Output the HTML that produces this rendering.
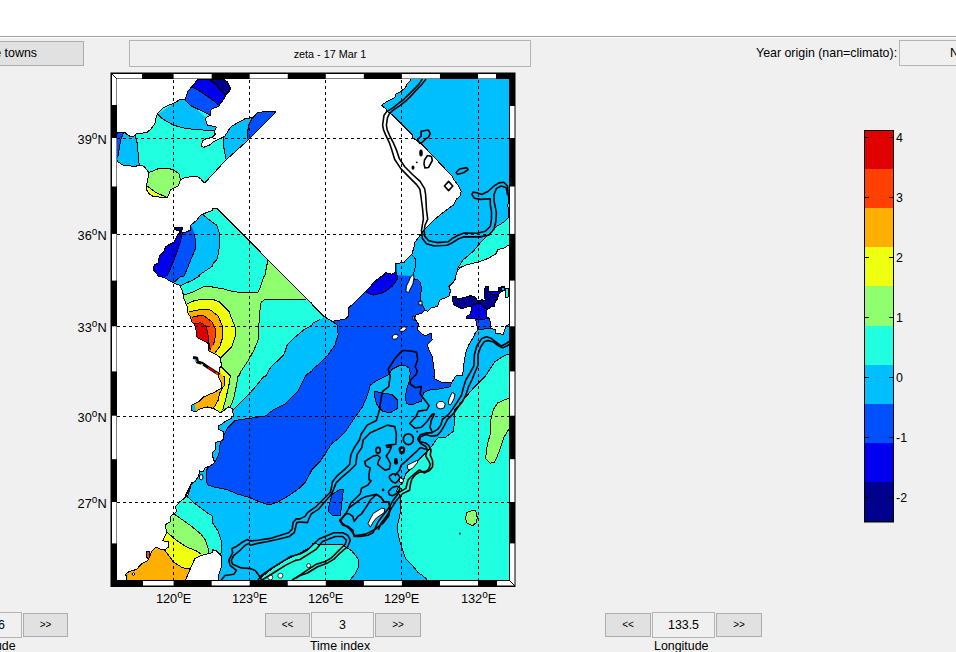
<!DOCTYPE html>
<html><head><meta charset="utf-8">
<style>
html,body{margin:0;padding:0;}
body{width:956px;height:652px;overflow:hidden;background:#f0f0f0;position:relative;font-family:"Liberation Sans",sans-serif;color:#000;}
.top{position:absolute;left:0;top:0;width:956px;height:36px;background:#fff;}
.topline{position:absolute;left:0;top:36px;width:956px;height:1px;background:#a0a0a0;}
.topline2{position:absolute;left:0;top:37px;width:956px;height:1px;background:#fff;}
.btn{position:absolute;box-sizing:border-box;background:#e1e1e1;border:1px solid #adadad;font-size:12.4px;text-align:center;}
.edit{position:absolute;box-sizing:border-box;background:#f0f0f0;border:1px solid #b4b4b4;font-size:12.4px;text-align:center;}
.lbl{position:absolute;font-size:12.4px;white-space:nowrap;}
svg{position:absolute;left:0;top:0;}
</style></head><body>
<div class="top"></div>
<div class="topline"></div>
<div class="topline2"></div>

<div class="btn" style="left:-40px;top:41px;width:124px;height:25px;line-height:23px;text-align:right;padding-right:46px;">le towns</div>
<div class="edit" style="left:129px;top:40px;width:402px;height:27px;line-height:26px;font-size:10.8px;">zeta - 17 Mar 1</div>
<div class="lbl" style="left:756px;top:46px;">Year origin (nan=climato):</div>
<div class="edit" style="left:899px;top:40px;width:80px;height:26px;line-height:24px;text-align:left;padding-left:50px;">NaN</div>

<div class="edit" style="left:-40px;top:612px;width:62px;height:26px;line-height:24px;text-align:right;padding-right:16px;">36</div>
<div class="btn" style="left:23px;top:613px;width:45px;height:24px;line-height:22px;font-size:10px;">&gt;&gt;</div>
<div class="lbl" style="left:-28.5px;top:638.5px;">Latitude</div>

<div class="btn" style="left:265px;top:613px;width:45px;height:24px;line-height:22px;font-size:10px;">&lt;&lt;</div>
<div class="edit" style="left:311px;top:612px;width:63px;height:26px;line-height:24px;">3</div>
<div class="btn" style="left:375px;top:613px;width:46px;height:24px;line-height:22px;font-size:10px;">&gt;&gt;</div>
<div class="lbl" style="left:310px;top:638.5px;">Time index</div>

<div class="btn" style="left:605px;top:613px;width:46px;height:24px;line-height:22px;font-size:10px;">&lt;&lt;</div>
<div class="edit" style="left:652px;top:612px;width:63px;height:26px;line-height:24px;">133.5</div>
<div class="btn" style="left:716px;top:613px;width:46px;height:24px;line-height:22px;font-size:10px;">&gt;&gt;</div>
<div class="lbl" style="left:654px;top:638.5px;">Longitude</div>

<svg width="956" height="652" viewBox="0 0 956 652" font-family="Liberation Sans">
<rect x="110.5" y="72.5" width="405" height="514.5" fill="#000"/>
<rect x="117" y="74" width="25.00" height="4.5" fill="#fff"/>
<rect x="173.6" y="74" width="38.05" height="4.5" fill="#fff"/>
<rect x="249.7" y="74" width="38.05" height="4.5" fill="#fff"/>
<rect x="325.8" y="74" width="38.05" height="4.5" fill="#fff"/>
<rect x="401.9" y="74" width="38.05" height="4.5" fill="#fff"/>
<rect x="478" y="74" width="18.00" height="4.5" fill="#fff"/>
<rect x="143" y="581" width="30.60" height="4.5" fill="#fff"/>
<rect x="211.65" y="581" width="38.05" height="4.5" fill="#fff"/>
<rect x="287.75" y="581" width="38.05" height="4.5" fill="#fff"/>
<rect x="363.85" y="581" width="38.05" height="4.5" fill="#fff"/>
<rect x="439.95" y="581" width="38.05" height="4.5" fill="#fff"/>
<rect x="497" y="581" width="12.00" height="4.5" fill="#fff"/>
<rect x="112" y="79" width="4.5" height="26.00" fill="#fff"/>
<rect x="112" y="138" width="4.5" height="48.50" fill="#fff"/>
<rect x="112" y="233.9" width="4.5" height="46.70" fill="#fff"/>
<rect x="112" y="326.3" width="4.5" height="45.10" fill="#fff"/>
<rect x="112" y="415.7" width="4.5" height="43.50" fill="#fff"/>
<rect x="112" y="502" width="4.5" height="41.40" fill="#fff"/>
<rect x="510" y="106" width="4.5" height="32.00" fill="#fff"/>
<rect x="510" y="186.5" width="4.5" height="47.40" fill="#fff"/>
<rect x="510" y="280.6" width="4.5" height="45.70" fill="#fff"/>
<rect x="510" y="371.4" width="4.5" height="44.30" fill="#fff"/>
<rect x="510" y="459.2" width="4.5" height="42.80" fill="#fff"/>
<rect x="510" y="543.4" width="4.5" height="36.60" fill="#fff"/>
<rect x="112" y="74" width="5" height="5" fill="#fff"/><line x1="111" y1="73" x2="117" y2="79" stroke="#000" stroke-width="1"/>
<rect x="509" y="580" width="5.5" height="5.5" fill="#fff"/><line x1="509" y1="580" x2="515" y2="586" stroke="#000" stroke-width="1"/>
<rect x="117" y="79" width="392" height="501" fill="#fff"/>
<g id="map"><defs><clipPath id="plot"><rect x="117" y="79" width="392" height="501"/></clipPath>
<clipPath id="w1"><path d="M198.4,79.1 L223.0,79.1 L227.6,82.1 L230.3,87.5 L229.9,90.6 L226.0,94.4 L224.5,98.3 L221.4,102.1 L219.1,105.9 L212.2,109.0 L210.7,110.5 L210.7,115.1 L206.1,117.4 L205.7,120.5 L207.6,125.1 L207.2,124.7 L216.4,127.2 L214.5,130.9 L215.2,134.5 L212.1,137.6 L207.2,138.2 L202.3,140.7 L201.7,146.2 L203.5,147.4 L209.6,145.0 L213.3,141.9 L223.1,137.0 L225.0,135.8 L230.5,127.2 L234.2,124.7 L245.2,118.6 L253.2,117.4 L257.5,112.5 L263.6,111.8 L275.9,111.8 L248.9,139.4 L225.6,160.3 L204.7,183.0 L204.0,182.9 L201.0,179.1 L196.4,176.0 L191.8,176.0 L187.2,177.5 L182.6,178.3 L180.3,180.6 L178.0,186.0 L174.9,187.5 L170.3,189.8 L169.5,192.9 L167.2,197.5 L153.4,196.7 L148.8,193.6 L146.5,189.8 L146.5,185.2 L147.3,182.1 L148.8,172.6 L144.2,166.5 L139.6,165.0 L135.0,166.5 L128.9,165.7 L122.7,165.0 L118.1,161.9 L115.1,157.3 L115.1,133.5 L118.9,132.7 L124.3,132.0 L125.8,133.5 L130.4,136.6 L135.0,135.8 L136.5,133.5 L146.5,132.7 L150.3,129.7 L154.9,123.5 L156.5,115.9 L158.0,112.8 L162.6,108.2 L170.3,104.4 L173.3,103.6 L179.5,99.8 L184.9,99.8 L186.4,95.9 L187.9,91.3 L191.8,86.7 L195.6,82.1Z"/></clipPath>
<clipPath id="w2"><path d="M174.9,227.4 L182.6,227.4 L182.9,229.7 L180.3,231.2 L184.1,232.7 L190.2,230.4 L191.0,225.1 L196.4,220.5 L200.2,215.6 L204.0,213.6 L212.0,210.5 L212.0,209.0 L216.6,208.2 L248.8,240.4 L284.1,276.0 L307.1,299.0 L312.0,303.6 L312.0,304.4 L324.3,316.6 L331.9,321.2 L338.1,320.5 L345.7,318.9 L348.8,315.9 L348.8,311.3 L348.0,308.2 L353.4,303.6 L358.0,299.0 L362.6,294.4 L365.7,291.3 L370.3,286.7 L373.3,282.9 L379.5,277.5 L382.6,276.0 L385.6,272.6 L391.8,274.2 L395.6,271.9 L395.6,263.4 L404.0,262.7 L405.6,260.4 L410.2,255.8 L412.0,254.2 L412.0,252.7 L413.5,249.6 L415.1,242.0 L419.7,235.8 L424.3,229.7 L428.9,225.1 L433.5,220.5 L438.1,216.6 L442.7,212.8 L448.8,208.2 L453.4,205.1 L456.5,199.0 L460.3,195.9 L461.1,191.3 L458.0,185.2 L453.4,179.1 L451.9,176.0 L451.9,176.0 L421.2,143.5 L412.0,137.3 L412.0,134.3 L391.8,114.3 L387.2,111.3 L385.6,108.2 L381.8,105.9 L382.6,104.4 L388.7,100.5 L394.8,97.5 L395.6,94.4 L401.0,91.3 L405.6,87.5 L407.1,83.7 L410.2,80.6 L413.5,71.4 L519.4,71.4 L519.4,245.0 L508.9,245.0 L504.0,248.1 L497.9,249.6 L495.6,254.2 L487.2,258.8 L478.0,261.9 L465.7,265.0 L459.5,268.0 L456.5,272.6 L455.7,276.0 L455.8,278.6 L452.6,282.9 L448.8,286.6 L450.4,290.4 L449.4,295.8 L445.1,297.9 L439.7,300.1 L437.6,306.5 L431.1,307.6 L427.9,311.3 L424.7,309.7 L422.5,312.9 L416.1,315.1 L414.5,318.3 L418.2,323.7 L417.7,330.1 L422.5,334.4 L425.8,335.5 L431.1,333.3 L432.2,340.0 L427.3,345.0 L428.9,349.6 L431.9,355.8 L433.5,365.0 L435.0,376.0 L433.5,376.0 L435.0,379.1 L442.7,382.9 L451.9,382.1 L454.9,377.5 L456.5,375.2 L462.6,376.0 L464.1,361.9 L465.7,352.7 L468.7,345.0 L473.3,337.3 L475.0,333.4 L477.8,329.7 L475.9,320.5 L475.0,318.7 L466.7,318.2 L466.2,316.4 L470.4,314.1 L471.3,309.5 L471.3,305.8 L462.1,308.5 L459.3,307.6 L453.8,304.9 L452.9,302.1 L452.9,296.6 L456.1,296.6 L457.5,299.3 L462.1,298.0 L470.4,295.7 L475.0,297.0 L477.8,301.2 L481.4,299.8 L485.1,300.3 L484.4,289.2 L486.0,286.4 L488.6,286.4 L488.6,291.6 L491.2,291.6 L498.0,291.4 L498.4,287.6 L501.1,287.2 L501.1,286.4 L504.7,286.4 L504.7,290.8 L501.5,291.2 L500.0,292.8 L498.4,295.2 L497.6,299.2 L495.2,300.8 L494.8,306.0 L491.6,306.7 L487.0,309.5 L486.0,312.2 L487.0,316.8 L489.7,318.7 L490.2,322.4 L490.2,327.9 L495.2,329.7 L495.2,333.4 L503.5,334.3 L504.5,329.7 L506.3,326.0 L509.2,324.2 L513.7,324.2 L519.4,589.4 L218.1,589.4 L218.1,579.7 L218.9,574.0 L221.2,567.9 L222.0,561.8 L221.2,555.6 L216.6,551.0 L212.0,549.5 L212.0,552.6 L207.1,554.1 L201.0,555.6 L194.8,558.7 L188.7,572.5 L185.6,579.7 L185.6,589.4 L126.6,589.4 L126.6,579.7 L125.8,574.0 L128.9,571.7 L136.5,569.4 L141.6,563.7 L147.9,560.5 L152.0,551.0 L156.2,547.0 L160.3,549.0 L164.5,550.1 L168.7,547.0 L168.7,541.7 L162.5,540.7 L166.8,532.3 L164.9,524.9 L170.3,521.9 L171.0,515.7 L176.4,511.9 L175.7,506.5 L179.5,501.9 L187.9,495.8 L190.2,488.1 L191.8,482.0 L183.5,500.0 L186.0,496.3 L188.6,491.3 L190.3,484.5 L195.3,481.1 L198.7,476.1 L199.5,471.0 L202.9,471.9 L205.4,467.6 L210.5,465.9 L214.7,462.6 L213.0,457.5 L212.2,453.3 L215.6,449.1 L215.6,442.3 L220.6,441.5 L224.0,438.9 L223.2,431.4 L218.9,429.7 L218.1,426.3 L222.3,423.8 L225.7,421.2 L230.8,418.7 L233.3,415.3 L232.4,408.6 L228.2,406.9 L224.0,410.3 L220.6,412.8 L213.9,408.6 L207.1,406.9 L200.4,408.6 L195.3,411.9 L191.1,410.3 L191.9,405.2 L198.7,401.8 L203.8,396.8 L213.9,392.5 L221.8,387.8 L220.9,381.4 L218.1,376.8 L220.0,367.6 L221.8,365.8 L220.9,362.1 L220.0,357.5 L216.3,354.7 L212.6,352.9 L208.9,351.0 L208.6,343.5 L202.5,340.4 L197.1,337.3 L196.4,331.2 L194.8,325.1 L191.8,322.0 L190.2,316.6 L187.9,312.8 L187.2,306.7 L184.1,299.0 L182.6,291.3 L179.5,285.2 L173.3,282.9 L164.1,277.5 L158.0,276.0 L156.5,273.4 L153.4,269.6 L154.2,265.0 L158.0,263.4 L159.5,255.8 L164.1,251.2 L165.7,246.6 L174.1,242.0 L176.4,237.3 L179.5,232.7 L178.7,230.4 L174.9,229.7Z"/></clipPath></defs>
<g clip-path="url(#plot)">
<g clip-path="url(#w1)"><rect x="117" y="79" width="392" height="501" fill="#20ffdf"/>
<path d="M135.0,135.8 L137.3,143.5 L138.1,152.7 L138.8,161.9 L139.6,165.0 L135.0,174.2 L112.0,174.2 L112.0,122.0Z" fill="#00bfff" stroke="none"/><path d="M135.0,135.8 L137.3,143.5 L138.1,152.7 L138.8,161.9 L139.6,165.0" fill="none" stroke="#000" stroke-width="1" stroke-linejoin="round" shape-rendering="crispEdges" />
<path d="M124.0,132.0 L120.9,138.9 L119.4,148.1 L117.8,157.3 L116.6,161.9 L112.0,168.0 L112.0,122.0Z" fill="#0050ff" stroke="none"/><path d="M124.0,132.0 L120.9,138.9 L119.4,148.1 L117.8,157.3" fill="none" stroke="#000" stroke-width="1" stroke-linejoin="round" shape-rendering="crispEdges" />
<path d="M158.0,114.3 L162.6,118.9 L173.3,125.1 L184.1,128.1 L196.4,129.7 L212.0,130.4 L215.2,131.5 L216.4,127.2 L206.0,117.4 L184.9,99.8 L150.3,88.3 L210.7,115.1 L199.2,109.8 L190.0,105.2 L184.6,99.8 L180.0,99.0Z" fill="#00bfff" stroke="none"/><path d="M158.0,114.3 L162.6,118.9 L173.3,125.1 L184.1,128.1 L196.4,129.7 L212.0,130.4 L215.2,131.5 M210.7,115.1 L199.2,109.8 L190.0,105.2 L184.6,99.8" fill="none" stroke="#000" stroke-width="1" stroke-linejoin="round" shape-rendering="crispEdges" />
<path d="M184.6,99.8 L190.0,105.2 L199.2,109.8 L210.7,115.1 L241.4,115.1 L241.4,76.0 L180.0,76.0 L180.0,99.8Z" fill="#0050ff" stroke="none"/><path d="M184.6,99.8 L190.0,105.2 L199.2,109.8 L210.7,115.1" fill="none" stroke="#000" stroke-width="1" stroke-linejoin="round" shape-rendering="crispEdges" />
<path d="M192.7,87.1 L200.0,91.3 L209.2,97.5 L219.1,105.2 L241.4,105.2 L241.4,76.0 L180.0,76.0 L180.0,87.1Z" fill="#0000ef" stroke="none"/><path d="M192.7,87.1 L200.0,91.3 L209.2,97.5 L219.1,105.2" fill="none" stroke="#000" stroke-width="1" stroke-linejoin="round" shape-rendering="crispEdges" />
<path d="M209.2,79.1 L216.1,85.2 L223.0,92.9 L225.3,96.0 L241.4,96.0 L241.4,76.0 L209.2,76.0Z" fill="#00008f" stroke="none"/><path d="M209.2,79.1 L216.1,85.2 L223.0,92.9 L225.3,96.0" fill="none" stroke="#000" stroke-width="1" stroke-linejoin="round" shape-rendering="crispEdges" />
<path d="M223.1,137.0 L223.7,146.8 L226.2,160.3 L263.6,160.3 L288.2,110.0 L226.8,110.0 L223.1,122.3Z" fill="#00bfff" stroke="none"/><path d="M223.1,137.0 L223.7,146.8 L226.2,160.3" fill="none" stroke="#000" stroke-width="1" stroke-linejoin="round" shape-rendering="crispEdges" />
<path d="M252.6,117.4 L248.9,124.7 L247.1,134.5 L247.7,139.4 L288.2,139.4 L288.2,110.0 L252.6,110.0Z" fill="#0050ff" stroke="none"/><path d="M252.6,117.4 L248.9,124.7 L247.1,134.5 L247.7,139.4" fill="none" stroke="#000" stroke-width="1" stroke-linejoin="round" shape-rendering="crispEdges" />
<path d="M148.8,172.6 L158.0,168.8 L165.7,168.0 L173.3,169.6 L179.5,174.2 L180.3,179.8 L181.0,188.3 L176.4,206.7 L142.7,206.7 L139.6,176.0 L139.6,271.1Z" fill="#8fff70" stroke="none"/><path d="M148.8,172.6 L158.0,168.8 L165.7,168.0 L173.3,169.6 L179.5,174.2 L180.3,179.8" fill="none" stroke="#000" stroke-width="1" stroke-linejoin="round" shape-rendering="crispEdges" />
<path d="M147.3,186.0 L156.5,192.9 L165.7,196.7 L167.2,206.7 L142.7,206.7 L142.7,183.7Z" fill="#efff10" stroke="none"/><path d="M147.3,186.0 L156.5,192.9 L165.7,196.7" fill="none" stroke="#000" stroke-width="1" stroke-linejoin="round" shape-rendering="crispEdges" />
</g>
<g clip-path="url(#w2)"><rect x="117" y="79" width="392" height="501" fill="#00bfff"/>
<path d="M194.8,234.3 L195.6,248.1 L188.7,265.0 L184.1,276.0 L181.0,276.0 L173.3,282.9 L158.0,282.9 L158.0,276.0 L150.3,276.0 L150.3,226.6 L191.8,226.6Z" fill="#0050ff" stroke="none"/><path d="M194.8,234.3 L195.6,248.1 L188.7,265.0 L184.1,276.0 L181.0,276.0 L173.3,282.9" fill="none" stroke="#000" stroke-width="1" stroke-linejoin="round" shape-rendering="crispEdges" />
<path d="M182.6,232.7 L179.5,245.0 L173.3,261.9 L167.2,276.0 L150.3,283.4 L150.3,226.6 L182.6,226.6Z" fill="#0000ef" stroke="none"/><path d="M182.6,232.7 L179.5,245.0 L173.3,261.9 L167.2,276.0" fill="none" stroke="#000" stroke-width="1" stroke-linejoin="round" shape-rendering="crispEdges" />
<path d="M175.2,227.2 L182.5,227.2 L182.5,229.6 L180.7,230.2 L180.1,233.3 L178.8,233.3 L178.2,230.2 L175.2,229.6Z" fill="#00008f" stroke="none"/><path d="M175.2,227.2 L182.5,227.2 L182.5,229.6 L180.7,230.2 L180.1,233.3 L178.8,233.3 L178.2,230.2 L175.2,229.6Z" fill="none" stroke="#000" stroke-width="1" stroke-linejoin="round" shape-rendering="crispEdges" />
<path d="M202.5,214.3 L212.0,222.0 L212.0,222.0 L216.6,225.1 L219.7,234.3 L219.7,245.0 L217.4,258.8 L212.0,265.0 L212.0,266.5 L197.9,276.0 L199.4,276.0 L191.8,280.6 L179.5,286.0 L183.3,295.2 L194.8,291.3 L204.0,286.7 L212.0,286.0 L212.0,287.5 L221.2,288.3 L231.9,291.3 L242.7,292.9 L258.0,292.1 L261.1,285.2 L264.1,276.0 L264.9,276.0 L265.7,271.1 L268.0,259.6 L273.3,252.7 L242.7,191.3 L212.0,191.3 L197.9,206.7Z" fill="#20ffdf" stroke="none"/><path d="M202.5,214.3 L212.0,222.0 L212.0,222.0 L216.6,225.1 L219.7,234.3 L219.7,245.0 L217.4,258.8 L212.0,265.0 L212.0,266.5 L197.9,276.0 L199.4,276.0 L191.8,280.6 L179.5,286.0 L183.3,295.2 L194.8,291.3 L204.0,286.7 L212.0,286.0 L212.0,287.5 L221.2,288.3 L231.9,291.3 L242.7,292.9 L258.0,292.1 L261.1,285.2 L264.1,276.0 L264.9,276.0 L265.7,271.1 L268.0,259.6" fill="none" stroke="#000" stroke-width="1" stroke-linejoin="round" shape-rendering="crispEdges" />
<path d="M183.3,295.2 L194.8,291.3 L204.0,286.7 L212.0,286.0 L212.0,287.5 L221.2,288.3 L231.9,291.3 L242.7,292.9 L258.0,292.1 L261.1,285.2 L264.1,276.0 L264.9,276.0 L265.7,271.1 L268.0,259.6 L288.7,268.0 L319.4,291.3 L319.4,300.5 L305.6,300.5 L265.7,299.0 L261.1,302.1 L259.5,314.3 L258.8,326.6 L258.0,340.4 L253.4,351.2 L247.3,361.9 L241.1,371.1 L238.8,376.0 L238.1,376.0 L236.5,385.2 L233.5,399.0 L230.4,406.7 L227.3,411.3 L212.0,422.0 L173.3,375.7 L173.3,291.3Z" fill="#8fff70" stroke="none"/><path d="M183.3,295.2 L194.8,291.3 L204.0,286.7 L212.0,286.0 L212.0,287.5 L221.2,288.3 L231.9,291.3 L242.7,292.9 L258.0,292.1 L261.1,285.2 L264.1,276.0 L264.9,276.0 L265.7,271.1 L268.0,259.6 M265.7,299.0 L261.1,302.1 L259.5,314.3 L258.8,326.6 L258.0,340.4 L253.4,351.2 L247.3,361.9 L241.1,371.1 L238.8,376.0 L238.1,376.0 L236.5,385.2 L233.5,399.0 L230.4,406.7" fill="none" stroke="#000" stroke-width="1" stroke-linejoin="round" shape-rendering="crispEdges" />
<path d="M187.2,303.6 L194.8,300.5 L204.0,299.0 L212.0,299.0 L212.0,299.0 L219.7,302.1 L228.9,311.3 L231.9,318.9 L235.0,326.6 L235.0,337.3 L231.9,346.6 L225.8,352.7 L221.2,357.3 L216.6,361.9 L221.2,366.5 L227.3,372.6 L230.4,376.0 L230.4,376.0 L228.9,385.2 L225.8,399.0 L222.7,409.7 L212.0,414.3 L173.3,337.3Z" fill="#efff10" stroke="none"/><path d="M187.2,303.6 L194.8,300.5 L204.0,299.0 L212.0,299.0 L212.0,299.0 L219.7,302.1 L228.9,311.3 L231.9,318.9 L235.0,326.6 L235.0,337.3 L231.9,346.6 L225.8,352.7 L221.2,357.3 M221.2,366.5 L227.3,372.6 L230.4,376.0 L230.4,376.0 L228.9,385.2 L225.8,399.0 L222.7,409.7" fill="none" stroke="#000" stroke-width="1" stroke-linejoin="round" shape-rendering="crispEdges" />
<path d="M188.7,312.0 L199.4,309.7 L207.1,309.0 L212.0,310.5 L212.0,311.3 L218.1,315.9 L222.0,325.1 L222.7,337.3 L219.7,346.6 L215.1,352.7 L212.0,354.2 L218.1,368.0 L222.7,376.0 L224.3,376.0 L224.3,385.2 L219.7,392.9 L218.1,400.5 L213.5,408.2 L196.7,414.3 L181.0,337.3Z" fill="#ffaf00" stroke="none"/><path d="M188.7,312.0 L199.4,309.7 L207.1,309.0 L212.0,310.5 L212.0,311.3 L218.1,315.9 L222.0,325.1 L222.7,337.3 L219.7,346.6 L215.1,352.7 M222.7,376.0 L224.3,376.0 L224.3,385.2 L219.7,392.9 L218.1,400.5 L213.5,408.2" fill="none" stroke="#000" stroke-width="1" stroke-linejoin="round" shape-rendering="crispEdges" />
<path d="M191.8,317.4 L197.9,315.9 L204.0,315.9 L210.2,320.5 L212.0,322.0 L212.0,322.0 L215.1,328.1 L215.1,337.3 L213.5,345.0 L212.0,346.6 L210.2,351.2 L188.7,352.7Z" fill="#ff4000" stroke="none"/><path d="M191.8,317.4 L197.9,315.9 L204.0,315.9 L210.2,320.5 L212.0,322.0 L212.0,322.0 L215.1,328.1 L215.1,337.3 L213.5,345.0" fill="none" stroke="#000" stroke-width="1" stroke-linejoin="round" shape-rendering="crispEdges" />
<path d="M218.1,374.5 L218.1,378.3 L212.0,379.1 L212.0,374.5Z" fill="#ff4000" stroke="none"/><path d="M218.1,374.5 L218.1,378.3" fill="none" stroke="#000" stroke-width="1" stroke-linejoin="round" shape-rendering="crispEdges" />
<path d="M194.1,323.5 L201.0,322.8 L206.3,326.6 L207.9,334.3 L208.6,340.4 L210.2,349.6 L188.7,349.6Z" fill="#df0000" stroke="none"/><path d="M194.1,323.5 L201.0,322.8 L206.3,326.6 L207.9,334.3 L208.6,340.4 L210.2,349.6" fill="none" stroke="#000" stroke-width="1" stroke-linejoin="round" shape-rendering="crispEdges" />
<path d="M265.7,299.0 L305.6,299.0 L312.0,303.6 L312.0,304.4 L324.3,316.6 L319.7,319.7 L312.0,323.5 L312.0,325.1 L304.0,329.7 L294.8,337.3 L287.2,345.0 L284.1,354.2 L276.4,361.9 L270.3,368.0 L265.7,376.0 L264.1,376.0 L258.0,383.7 L248.8,394.4 L239.6,403.6 L233.5,409.7 L228.9,412.8 L228.9,412.8 L230.4,406.7 L233.5,399.0 L236.5,385.2 L238.1,376.0 L238.8,376.0 L241.1,371.1 L247.3,361.9 L253.4,351.2 L258.0,340.4 L258.8,326.6 L259.5,314.3 L261.1,302.1Z" fill="#20ffdf" stroke="none"/><path d="M265.7,299.0 L305.6,299.0 M319.7,319.7 L312.0,323.5 L312.0,325.1 L304.0,329.7 L294.8,337.3 L287.2,345.0 L284.1,354.2 L276.4,361.9 L270.3,368.0 L265.7,376.0 L264.1,376.0 L258.0,383.7 L248.8,394.4 L239.6,403.6 L233.5,409.7 L228.9,412.8 M230.4,406.7 L233.5,399.0 L236.5,385.2 L238.1,376.0 L238.8,376.0 L241.1,371.1 L247.3,361.9 L253.4,351.2 L258.0,340.4 L258.8,326.6 L259.5,314.3 L261.1,302.1 L265.7,299.0" fill="none" stroke="#000" stroke-width="1" stroke-linejoin="round" shape-rendering="crispEdges" />
<path d="M305.6,376.0 L297.9,391.3 L285.6,403.6 L273.3,409.7 L265.7,415.9 L250.3,418.2 L235.0,420.5 L227.3,428.1 L224.3,434.3 L220.6,440.6 L218.9,454.1 L215.6,460.9 L208.8,465.9 L206.3,471.0 L207.1,484.5 L212.0,486.6 L227.3,489.7 L238.1,494.3 L248.8,497.3 L258.0,501.2 L268.7,505.0 L278.0,501.9 L288.7,495.8 L299.4,488.1 L305.6,482.0 L312.0,469.6 L319.7,461.9 L325.8,452.7 L331.9,443.5 L338.1,438.9 L345.7,431.2 L354.9,417.4 L362.6,406.7 L367.2,395.9 L370.3,385.2 L376.4,380.6 L382.1,377.9 L389.4,374.2 L391.9,369.3 L399.3,365.6 L404.2,365.0 L409.1,368.0 L410.3,372.9 L409.1,381.5 L406.6,388.9 L405.4,397.5 L406.6,403.6 L411.5,404.8 L421.3,401.2 L423.8,392.6 L428.7,390.1 L440.0,388.9 L435.0,389.8 L450.3,386.7 L453.4,376.0 L458.0,368.3 L458.0,322.0 L442.7,276.0 L412.0,276.0 L382.6,274.5 L358.0,291.3 L342.7,314.3 L331.9,321.2 L337.3,325.1 L338.1,334.3 L335.0,345.0 L327.3,355.8 L319.7,363.4 L312.0,369.6 L312.0,371.1 L307.1,374.2Z" fill="#0050ff" stroke="none"/><path d="M305.6,376.0 L297.9,391.3 L285.6,403.6 L273.3,409.7 L265.7,415.9 L250.3,418.2 L235.0,420.5 L227.3,428.1 L224.3,434.3 L220.6,440.6 L218.9,454.1 L215.6,460.9 L208.8,465.9 L206.3,471.0 L207.1,484.5 L212.0,486.6 L227.3,489.7 L238.1,494.3 L248.8,497.3 L258.0,501.2 L268.7,505.0 L278.0,501.9 L288.7,495.8 L299.4,488.1 L305.6,482.0 L312.0,469.6 L319.7,461.9 L325.8,452.7 L331.9,443.5 L338.1,438.9 L345.7,431.2 L354.9,417.4 L362.6,406.7 L367.2,395.9 L370.3,385.2 L376.4,380.6 L382.1,377.9 L389.4,374.2 L391.9,369.3 L399.3,365.6 L404.2,365.0 L409.1,368.0 L410.3,372.9 L409.1,381.5 L406.6,388.9 L405.4,397.5 L406.6,403.6 L411.5,404.8 L421.3,401.2 L423.8,392.6 L428.7,390.1 L440.0,388.9 L435.0,389.8 L450.3,386.7 L453.4,376.0 M331.9,321.2 L337.3,325.1 L338.1,334.3 L335.0,345.0 L327.3,355.8 L319.7,363.4 L312.0,369.6 L312.0,371.1 L307.1,374.2 L305.6,376.0" fill="none" stroke="#000" stroke-width="1" stroke-linejoin="round" shape-rendering="crispEdges" />
<path d="M365.7,292.1 L373.3,295.2 L382.6,292.9 L391.8,286.7 L396.4,280.6 L397.9,276.0 L397.6,279.7 L396.7,272.4 L396.0,250.0 L340.0,250.0 L340.0,300.0Z" fill="#0000ef" stroke="none"/><path d="M365.7,292.1 L373.3,295.2 L382.6,292.9 L391.8,286.7 L396.4,280.6 L397.9,276.0 L397.6,279.7 L396.7,272.4" fill="none" stroke="#000" stroke-width="1" stroke-linejoin="round" shape-rendering="crispEdges" />
<path d="M412.0,240.0 L412.4,254.9 L415.1,258.5 L415.1,267.8 L413.3,274.2 L414.2,279.7 L417.9,279.7 L420.6,282.5 L421.6,290.0 L420.4,293.6 L420.9,301.1 L424.7,309.7 L427.9,311.3 L470.0,311.0 L470.0,240.0Z" fill="#00bfff" stroke="none"/><path d="M412.4,254.9 L415.1,258.5 L415.1,267.8 L413.3,274.2 L414.2,279.7 L417.9,279.7 L420.6,282.5 L421.6,290.0 L420.4,293.6 L420.9,301.1 L424.7,309.7 L427.9,311.3" fill="none" stroke="#000" stroke-width="1" stroke-linejoin="round" shape-rendering="crispEdges" />
<path d="M508.9,195.9 L507.9,205.1 L508.6,217.4 L504.0,222.0 L496.4,226.6 L490.2,232.7 L481.0,242.0 L473.3,251.2 L462.6,260.4 L458.0,268.0 L456.5,276.0 L519.4,283.4 L519.4,195.9Z" fill="#20ffdf" stroke="none"/><path d="M508.9,195.9 L507.9,205.1 L508.6,217.4 L504.0,222.0 L496.4,226.6 L490.2,232.7 L481.0,242.0 L473.3,251.2 L462.6,260.4 L458.0,268.0 L456.5,276.0" fill="none" stroke="#000" stroke-width="1" stroke-linejoin="round" shape-rendering="crispEdges" />
<path d="M452.0,294.7 L481.4,293.8 L483.3,285.5 L513.7,280.0 L513.7,320.5 L495.2,328.8 L449.2,328.8Z" fill="#00008f" stroke="none"/>
<path d="M471.3,305.8 L475.9,303.9 L479.6,303.0 L483.3,305.8 L487.0,309.5 L495.2,309.5 L495.2,326.0 L463.0,326.0 L463.0,305.8Z" fill="#0000ef" stroke="none"/><path d="M471.3,305.8 L475.9,303.9 L479.6,303.0 L483.3,305.8 L487.0,309.5" fill="none" stroke="#000" stroke-width="1" stroke-linejoin="round" shape-rendering="crispEdges" />
<path d="M475.9,319.6 L489.7,318.7 L495.2,318.7 L495.2,328.3 L490.2,328.3 L477.8,329.7 L467.6,329.7 L467.6,319.6Z" fill="#0050ff" stroke="none"/><path d="M475.9,319.6 L489.7,318.7 M490.2,328.3 L477.8,329.7" fill="none" stroke="#000" stroke-width="1" stroke-linejoin="round" shape-rendering="crispEdges" />
<path d="M491.2,292.0 L498.0,291.8 L500.8,290.8 L500.0,292.8 L498.0,294.7 L492.0,294.4Z" fill="#0000ef" stroke="none"/><path d="M491.2,292.0 L498.0,291.8 L500.8,290.8 L500.0,292.8 L498.0,294.7 L492.0,294.4Z" fill="none" stroke="#000" stroke-width="1" stroke-linejoin="round" shape-rendering="crispEdges" />
<path d="M501.1,287.2 L504.0,287.2 L504.0,290.8 L501.1,290.8Z" fill="#00bfff" stroke="none"/><path d="M501.1,287.2 L504.0,287.2 L504.0,290.8 L501.1,290.8Z" fill="none" stroke="#000" stroke-width="1" stroke-linejoin="round" shape-rendering="crispEdges" />
<path d="M512.0,352.7 L504.0,355.8 L494.8,361.9 L488.7,371.1 L485.6,376.0 L473.3,388.3 L462.6,400.5 L454.9,409.7 L454.9,418.9 L453.4,431.2 L445.7,437.3 L438.7,437.2 L436.3,439.6 L431.3,447.0 L424.0,454.4 L417.9,460.5 L410.5,469.1 L405.6,474.0 L403.1,481.0 L397.6,488.4 L396.7,491.2 L399.4,494.8 L400.4,497.6 L400.4,506.8 L400.2,512.7 L397.1,528.0 L399.4,540.3 L402.5,549.5 L405.6,558.7 L412.0,564.8 L418.1,572.5 L422.7,575.6 L427.3,579.7 L427.3,589.4 L519.4,589.4 L519.4,558.7 L519.4,352.7Z" fill="#20ffdf" stroke="none"/><path d="M512.0,352.7 L504.0,355.8 L494.8,361.9 L488.7,371.1 L485.6,376.0 L473.3,388.3 L462.6,400.5 L454.9,409.7 L454.9,418.9 L453.4,431.2 L445.7,437.3 L438.7,437.2 L436.3,439.6 L431.3,447.0 L424.0,454.4 L417.9,460.5 L410.5,469.1 L405.6,474.0 L403.1,481.0 L397.6,488.4 L396.7,491.2 L399.4,494.8 L400.4,497.6 L400.4,506.8 L400.2,512.7 L397.1,528.0 L399.4,540.3 L402.5,549.5 L405.6,558.7 L412.0,564.8 L418.1,572.5 L422.7,575.6 L427.3,579.7" fill="none" stroke="#000" stroke-width="1" stroke-linejoin="round" shape-rendering="crispEdges" />
<path d="M258.0,589.4 L258.0,579.7 L273.3,567.9 L285.6,560.2 L297.9,554.1 L312.0,546.4 L312.0,543.3 L324.3,544.9 L342.7,544.9 L351.9,551.0 L358.0,558.7 L358.0,567.9 L354.9,574.0 L350.3,579.7 L350.3,589.4Z" fill="#20ffdf" stroke="none"/><path d="M258.0,579.7 L273.3,567.9 L285.6,560.2 L297.9,554.1 L312.0,546.4 L312.0,543.3 L324.3,544.9 L342.7,544.9 L351.9,551.0 L358.0,558.7 L358.0,567.9 L354.9,574.0 L350.3,579.7" fill="none" stroke="#000" stroke-width="1" stroke-linejoin="round" shape-rendering="crispEdges" />
<path d="M485.6,458.8 L487.2,445.0 L490.2,434.3 L491.0,418.9 L493.3,409.7 L497.9,402.8 L508.6,398.2 L519.4,398.2 L519.4,426.6 L510.2,426.6 L504.0,437.3 L499.4,451.2 L494.8,461.9 L490.2,463.4Z" fill="#8fff70" stroke="none"/><path d="M485.6,458.8 L487.2,445.0 L490.2,434.3 L491.0,418.9 L493.3,409.7 L497.9,402.8 L508.6,398.2 M510.2,426.6 L504.0,437.3 L499.4,451.2 L494.8,461.9 L490.2,463.4 L485.6,458.8" fill="none" stroke="#000" stroke-width="1" stroke-linejoin="round" shape-rendering="crispEdges" />
<path d="M466.4,512.7 L470.3,511.1 L475.7,510.4 L477.2,517.3 L476.4,522.6 L472.6,525.7 L467.2,523.4 L465.7,518.8Z" fill="#8fff70" stroke="none"/><path d="M466.4,512.7 L470.3,511.1 L475.7,510.4 L477.2,517.3 L476.4,522.6 L472.6,525.7 L467.2,523.4 L465.7,518.8Z" fill="none" stroke="#000" stroke-width="1" stroke-linejoin="round" shape-rendering="crispEdges" />
<path d="M331.9,494.3 L339.6,489.7 L343.4,489.7 L341.9,501.9 L340.4,515.7 L331.9,515.0 L328.1,511.1 L329.6,503.5Z" fill="#0050ff" stroke="none"/><path d="M331.9,494.3 L339.6,489.7 L343.4,489.7 L341.9,501.9 L340.4,515.7 L331.9,515.0 L328.1,511.1 L329.6,503.5Z" fill="none" stroke="#000" stroke-width="1" stroke-linejoin="round" shape-rendering="crispEdges" />
<path d="M374.9,391.3 L381.0,392.9 L391.8,394.4 L397.9,400.5 L397.9,408.2 L390.2,412.8 L382.6,411.3 L379.5,408.2 L376.4,403.6 L374.9,397.5Z" fill="#0050ff" stroke="none"/><path d="M374.9,391.3 L381.0,392.9 L391.8,394.4 L397.9,400.5 L397.9,408.2 L390.2,412.8 L382.6,411.3 L379.5,408.2 L376.4,403.6 L374.9,397.5Z" fill="none" stroke="#000" stroke-width="1" stroke-linejoin="round" shape-rendering="crispEdges" />
<path d="M187.2,496.6 L194.8,503.5 L201.0,508.1 L207.1,512.7 L212.0,515.7 L212.0,521.9 L218.1,531.1 L221.2,540.3 L221.2,551.0 L220.4,558.7 L219.7,567.9 L218.1,577.1 L218.1,589.4 L158.0,589.4 L158.0,528.0 L185.6,491.2Z" fill="#20ffdf" stroke="none"/><path d="M187.2,496.6 L194.8,503.5 L201.0,508.1 L207.1,512.7 L212.0,515.7 L212.0,521.9 L218.1,531.1 L221.2,540.3 L221.2,551.0 L220.4,558.7 L219.7,567.9 L218.1,577.1" fill="none" stroke="#000" stroke-width="1" stroke-linejoin="round" shape-rendering="crispEdges" />
<path d="M173.3,513.4 L181.0,518.8 L191.8,526.5 L201.0,534.1 L205.6,540.3 L208.6,549.5 L208.6,554.1 L188.7,589.4 L158.0,589.4 L158.0,512.7Z" fill="#8fff70" stroke="none"/><path d="M173.3,513.4 L181.0,518.8 L191.8,526.5 L201.0,534.1 L205.6,540.3 L208.6,549.5 L208.6,554.1" fill="none" stroke="#000" stroke-width="1" stroke-linejoin="round" shape-rendering="crispEdges" />
<path d="M165.7,531.1 L176.4,540.3 L185.6,546.4 L196.4,551.0 L201.0,554.1 L204.0,589.4 L158.0,589.4 L158.0,531.1Z" fill="#efff10" stroke="none"/><path d="M165.7,531.1 L176.4,540.3 L185.6,546.4 L196.4,551.0 L201.0,554.1" fill="none" stroke="#000" stroke-width="1" stroke-linejoin="round" shape-rendering="crispEdges" />
<path d="M164.9,550.3 L173.3,561.8 L182.6,567.9 L191.8,568.7 L204.0,574.0 L197.9,589.4 L127.3,589.4 L127.3,540.3 L158.0,540.3Z" fill="#ffaf00" stroke="none"/><path d="M164.9,550.3 L173.3,561.8 L182.6,567.9 L191.8,568.7" fill="none" stroke="#000" stroke-width="1" stroke-linejoin="round" shape-rendering="crispEdges" />
</g>
<path d="M146.5,551.8 L149.6,551.8 L149.6,557.2 L148.0,558.7 L146.5,557.2Z" fill="#ff4000" stroke="none"/><path d="M146.5,551.8 L149.6,551.8 L149.6,557.2 L148.0,558.7 L146.5,557.2Z" fill="none" stroke="#000" stroke-width="1" stroke-linejoin="round" shape-rendering="crispEdges" />
<path d="M505.5,288.8 L508.2,288.8 L508.7,296.9 L505.9,297.2Z" fill="#20ffdf" stroke="none"/><path d="M505.5,288.8 L508.2,288.8 L508.7,296.9 L505.9,297.2Z" fill="none" stroke="#000" stroke-width="1" stroke-linejoin="round" shape-rendering="crispEdges" />
<path d="M199.6,475 L202.5,474.6 L203,478 L201.5,480 L199.6,479Z" fill="#fff" stroke="#000" stroke-width="1"/>
<path d="M413.5,274.2 L414,278 L412.9,284 L408.6,292.5 L405.9,291.5 L406.4,286.1 L408.7,281.6 L410.5,277Z" fill="#fff" stroke="#000" stroke-width="1"/>
<path d="M368,523.4 L370.3,527.2 L373.3,521.9 L376.4,518 L384.1,512.7 L384.9,508.8 L381.8,508.1 L373.3,513.4 L370.3,518.8Z" fill="#fff" stroke="#000" stroke-width="1"/>
<path d="M452,392.5 L455,394 L454,399 L450.5,405 L448.3,404 L449,399Z" fill="#fff" stroke="#000" stroke-width="1"/>
<path d="M436.5,404 L439,401.5 L443,401.5 L445.3,404 L444,408 L440,409 L437,407.5Z" fill="#fff" stroke="#000" stroke-width="1"/>
<path d="M407.5,465 L416.5,460.7 L418,462 L412.6,468.3 L409,469.9 L407.3,468.3Z" fill="#fff" stroke="#000" stroke-width="1"/>
<path d="M392,337 L394,334.5 L397.5,334.3 L398.3,336.5 L396.5,339 L393,339.2Z" fill="#fff" stroke="#000" stroke-width="1"/>
<path d="M399.5,330 L402,327.2 L405.5,326.6 L406.3,328.5 L404,331.2 L400.5,331.5Z" fill="#fff" stroke="#000" stroke-width="1"/>
<path d="M418.8,301.5 L422,301.1 L422,304.9 L419,304.9Z" fill="#fff" stroke="#000" stroke-width="1"/>
<path d="M412.9,316.2 L415,316.5 L415,319.9 L413,319.9Z" fill="#fff" stroke="#000" stroke-width="1"/>
<path d="M399.5,476.8 L403.6,480 L402,484.2 L399,481Z" fill="#fff" stroke="#000" stroke-width="1"/>
<path d="M131.9,574 L133.5,572.5 L135,574 L133.5,575.6Z" fill="#fff" stroke="#000" stroke-width="1"/>
<circle cx="270.3" cy="577.4" r="2.5" fill="#fff" stroke="#000" stroke-width="0.8"/>
<circle cx="280.4" cy="575.7" r="2.5" fill="#fff" stroke="#000" stroke-width="0.8"/>
<circle cx="308.6" cy="565.6" r="2" fill="#fff" stroke="#000" stroke-width="0.8"/>
<path d="M193,357.5 L196.5,358 L197.5,362 L202.5,363.5 L207.5,367 L214.5,371.5 L219.5,374.5" fill="none" stroke="#000" stroke-width="3.2" stroke-linejoin="round"/>
<path d="M195,359 L196.5,362" stroke="#00bfff" stroke-width="1.3"/><path d="M201,364 L203,365" stroke="#efff10" stroke-width="1.3"/><path d="M208,367.5 L214.5,371.8" stroke="#df0000" stroke-width="1.6"/><path d="M215.5,372.5 L218.5,374.3" stroke="#ff4000" stroke-width="1.6"/>
<path d="M198.4,79.1 L223.0,79.1 L227.6,82.1 L230.3,87.5 L229.9,90.6 L226.0,94.4 L224.5,98.3 L221.4,102.1 L219.1,105.9 L212.2,109.0 L210.7,110.5 L210.7,115.1 L206.1,117.4 L205.7,120.5 L207.6,125.1 L207.2,124.7 L216.4,127.2 L214.5,130.9 L215.2,134.5 L212.1,137.6 L207.2,138.2 L202.3,140.7 L201.7,146.2 L203.5,147.4 L209.6,145.0 L213.3,141.9 L223.1,137.0 L225.0,135.8 L230.5,127.2 L234.2,124.7 L245.2,118.6 L253.2,117.4 L257.5,112.5 L263.6,111.8 L275.9,111.8 L248.9,139.4 L225.6,160.3 L204.7,183.0 L204.0,182.9 L201.0,179.1 L196.4,176.0 L191.8,176.0 L187.2,177.5 L182.6,178.3 L180.3,180.6 L178.0,186.0 L174.9,187.5 L170.3,189.8 L169.5,192.9 L167.2,197.5 L153.4,196.7 L148.8,193.6 L146.5,189.8 L146.5,185.2 L147.3,182.1 L148.8,172.6 L144.2,166.5 L139.6,165.0 L135.0,166.5 L128.9,165.7 L122.7,165.0 L118.1,161.9 L115.1,157.3 L115.1,133.5 L118.9,132.7 L124.3,132.0 L125.8,133.5 L130.4,136.6 L135.0,135.8 L136.5,133.5 L146.5,132.7 L150.3,129.7 L154.9,123.5 L156.5,115.9 L158.0,112.8 L162.6,108.2 L170.3,104.4 L173.3,103.6 L179.5,99.8 L184.9,99.8 L186.4,95.9 L187.9,91.3 L191.8,86.7 L195.6,82.1Z" fill="none" stroke="none"/><path d="M198.4,79.1 L223.0,79.1 L227.6,82.1 L230.3,87.5 L229.9,90.6 L226.0,94.4 L224.5,98.3 L221.4,102.1 L219.1,105.9 L212.2,109.0 L210.7,110.5 L210.7,115.1 L206.1,117.4 L205.7,120.5 L207.6,125.1 L207.2,124.7 L216.4,127.2 L214.5,130.9 L215.2,134.5 L212.1,137.6 L207.2,138.2 L202.3,140.7 L201.7,146.2 L203.5,147.4 L209.6,145.0 L213.3,141.9 L223.1,137.0 L225.0,135.8 L230.5,127.2 L234.2,124.7 L245.2,118.6 L253.2,117.4 L257.5,112.5 L263.6,111.8 L275.9,111.8 L248.9,139.4 L225.6,160.3 L204.7,183.0 L204.0,182.9 L201.0,179.1 L196.4,176.0 L191.8,176.0 L187.2,177.5 L182.6,178.3 L180.3,180.6 L178.0,186.0 L174.9,187.5 L170.3,189.8 L169.5,192.9 L167.2,197.5 L153.4,196.7 L148.8,193.6 L146.5,189.8 L146.5,185.2 L147.3,182.1 L148.8,172.6 L144.2,166.5 L139.6,165.0 L135.0,166.5 L128.9,165.7 L122.7,165.0 L118.1,161.9 L115.1,157.3 L115.1,133.5 L118.9,132.7 L124.3,132.0 L125.8,133.5 L130.4,136.6 L135.0,135.8 L136.5,133.5 L146.5,132.7 L150.3,129.7 L154.9,123.5 L156.5,115.9 L158.0,112.8 L162.6,108.2 L170.3,104.4 L173.3,103.6 L179.5,99.8 L184.9,99.8 L186.4,95.9 L187.9,91.3 L191.8,86.7 L195.6,82.1Z" fill="none" stroke="#000" stroke-width="1" stroke-linejoin="round" shape-rendering="crispEdges" />
<path d="M174.9,227.4 L182.6,227.4 L182.9,229.7 L180.3,231.2 L184.1,232.7 L190.2,230.4 L191.0,225.1 L196.4,220.5 L200.2,215.6 L204.0,213.6 L212.0,210.5 L212.0,209.0 L216.6,208.2 L248.8,240.4 L284.1,276.0 L307.1,299.0 L312.0,303.6 L312.0,304.4 L324.3,316.6 L331.9,321.2 L338.1,320.5 L345.7,318.9 L348.8,315.9 L348.8,311.3 L348.0,308.2 L353.4,303.6 L358.0,299.0 L362.6,294.4 L365.7,291.3 L370.3,286.7 L373.3,282.9 L379.5,277.5 L382.6,276.0 L385.6,272.6 L391.8,274.2 L395.6,271.9 L395.6,263.4 L404.0,262.7 L405.6,260.4 L410.2,255.8 L412.0,254.2 L412.0,252.7 L413.5,249.6 L415.1,242.0 L419.7,235.8 L424.3,229.7 L428.9,225.1 L433.5,220.5 L438.1,216.6 L442.7,212.8 L448.8,208.2 L453.4,205.1 L456.5,199.0 L460.3,195.9 L461.1,191.3 L458.0,185.2 L453.4,179.1 L451.9,176.0 L451.9,176.0 L421.2,143.5 L412.0,137.3 L412.0,134.3 L391.8,114.3 L387.2,111.3 L385.6,108.2 L381.8,105.9 L382.6,104.4 L388.7,100.5 L394.8,97.5 L395.6,94.4 L401.0,91.3 L405.6,87.5 L407.1,83.7 L410.2,80.6 L413.5,71.4 L519.4,71.4 L519.4,245.0 L508.9,245.0 L504.0,248.1 L497.9,249.6 L495.6,254.2 L487.2,258.8 L478.0,261.9 L465.7,265.0 L459.5,268.0 L456.5,272.6 L455.7,276.0 L455.8,278.6 L452.6,282.9 L448.8,286.6 L450.4,290.4 L449.4,295.8 L445.1,297.9 L439.7,300.1 L437.6,306.5 L431.1,307.6 L427.9,311.3 L424.7,309.7 L422.5,312.9 L416.1,315.1 L414.5,318.3 L418.2,323.7 L417.7,330.1 L422.5,334.4 L425.8,335.5 L431.1,333.3 L432.2,340.0 L427.3,345.0 L428.9,349.6 L431.9,355.8 L433.5,365.0 L435.0,376.0 L433.5,376.0 L435.0,379.1 L442.7,382.9 L451.9,382.1 L454.9,377.5 L456.5,375.2 L462.6,376.0 L464.1,361.9 L465.7,352.7 L468.7,345.0 L473.3,337.3 L475.0,333.4 L477.8,329.7 L475.9,320.5 L475.0,318.7 L466.7,318.2 L466.2,316.4 L470.4,314.1 L471.3,309.5 L471.3,305.8 L462.1,308.5 L459.3,307.6 L453.8,304.9 L452.9,302.1 L452.9,296.6 L456.1,296.6 L457.5,299.3 L462.1,298.0 L470.4,295.7 L475.0,297.0 L477.8,301.2 L481.4,299.8 L485.1,300.3 L484.4,289.2 L486.0,286.4 L488.6,286.4 L488.6,291.6 L491.2,291.6 L498.0,291.4 L498.4,287.6 L501.1,287.2 L501.1,286.4 L504.7,286.4 L504.7,290.8 L501.5,291.2 L500.0,292.8 L498.4,295.2 L497.6,299.2 L495.2,300.8 L494.8,306.0 L491.6,306.7 L487.0,309.5 L486.0,312.2 L487.0,316.8 L489.7,318.7 L490.2,322.4 L490.2,327.9 L495.2,329.7 L495.2,333.4 L503.5,334.3 L504.5,329.7 L506.3,326.0 L509.2,324.2 L513.7,324.2 L519.4,589.4 L218.1,589.4 L218.1,579.7 L218.9,574.0 L221.2,567.9 L222.0,561.8 L221.2,555.6 L216.6,551.0 L212.0,549.5 L212.0,552.6 L207.1,554.1 L201.0,555.6 L194.8,558.7 L188.7,572.5 L185.6,579.7 L185.6,589.4 L126.6,589.4 L126.6,579.7 L125.8,574.0 L128.9,571.7 L136.5,569.4 L141.6,563.7 L147.9,560.5 L152.0,551.0 L156.2,547.0 L160.3,549.0 L164.5,550.1 L168.7,547.0 L168.7,541.7 L162.5,540.7 L166.8,532.3 L164.9,524.9 L170.3,521.9 L171.0,515.7 L176.4,511.9 L175.7,506.5 L179.5,501.9 L187.9,495.8 L190.2,488.1 L191.8,482.0 L183.5,500.0 L186.0,496.3 L188.6,491.3 L190.3,484.5 L195.3,481.1 L198.7,476.1 L199.5,471.0 L202.9,471.9 L205.4,467.6 L210.5,465.9 L214.7,462.6 L213.0,457.5 L212.2,453.3 L215.6,449.1 L215.6,442.3 L220.6,441.5 L224.0,438.9 L223.2,431.4 L218.9,429.7 L218.1,426.3 L222.3,423.8 L225.7,421.2 L230.8,418.7 L233.3,415.3 L232.4,408.6 L228.2,406.9 L224.0,410.3 L220.6,412.8 L213.9,408.6 L207.1,406.9 L200.4,408.6 L195.3,411.9 L191.1,410.3 L191.9,405.2 L198.7,401.8 L203.8,396.8 L213.9,392.5 L221.8,387.8 L220.9,381.4 L218.1,376.8 L220.0,367.6 L221.8,365.8 L220.9,362.1 L220.0,357.5 L216.3,354.7 L212.6,352.9 L208.9,351.0 L208.6,343.5 L202.5,340.4 L197.1,337.3 L196.4,331.2 L194.8,325.1 L191.8,322.0 L190.2,316.6 L187.9,312.8 L187.2,306.7 L184.1,299.0 L182.6,291.3 L179.5,285.2 L173.3,282.9 L164.1,277.5 L158.0,276.0 L156.5,273.4 L153.4,269.6 L154.2,265.0 L158.0,263.4 L159.5,255.8 L164.1,251.2 L165.7,246.6 L174.1,242.0 L176.4,237.3 L179.5,232.7 L178.7,230.4 L174.9,229.7Z" fill="none" stroke="none"/><path d="M174.9,227.4 L182.6,227.4 L182.9,229.7 L180.3,231.2 L184.1,232.7 L190.2,230.4 L191.0,225.1 L196.4,220.5 L200.2,215.6 L204.0,213.6 L212.0,210.5 L212.0,209.0 L216.6,208.2 L248.8,240.4 L284.1,276.0 L307.1,299.0 L312.0,303.6 L312.0,304.4 L324.3,316.6 L331.9,321.2 L338.1,320.5 L345.7,318.9 L348.8,315.9 L348.8,311.3 L348.0,308.2 L353.4,303.6 L358.0,299.0 L362.6,294.4 L365.7,291.3 L370.3,286.7 L373.3,282.9 L379.5,277.5 L382.6,276.0 L385.6,272.6 L391.8,274.2 L395.6,271.9 L395.6,263.4 L404.0,262.7 L405.6,260.4 L410.2,255.8 L412.0,254.2 L412.0,252.7 L413.5,249.6 L415.1,242.0 L419.7,235.8 L424.3,229.7 L428.9,225.1 L433.5,220.5 L438.1,216.6 L442.7,212.8 L448.8,208.2 L453.4,205.1 L456.5,199.0 L460.3,195.9 L461.1,191.3 L458.0,185.2 L453.4,179.1 L451.9,176.0 L451.9,176.0 L421.2,143.5 L412.0,137.3 L412.0,134.3 L391.8,114.3 L387.2,111.3 L385.6,108.2 L381.8,105.9 L382.6,104.4 L388.7,100.5 L394.8,97.5 L395.6,94.4 L401.0,91.3 L405.6,87.5 L407.1,83.7 L410.2,80.6 L413.5,71.4 L519.4,71.4 L519.4,245.0 L508.9,245.0 L504.0,248.1 L497.9,249.6 L495.6,254.2 L487.2,258.8 L478.0,261.9 L465.7,265.0 L459.5,268.0 L456.5,272.6 L455.7,276.0 L455.8,278.6 L452.6,282.9 L448.8,286.6 L450.4,290.4 L449.4,295.8 L445.1,297.9 L439.7,300.1 L437.6,306.5 L431.1,307.6 L427.9,311.3 L424.7,309.7 L422.5,312.9 L416.1,315.1 L414.5,318.3 L418.2,323.7 L417.7,330.1 L422.5,334.4 L425.8,335.5 L431.1,333.3 L432.2,340.0 L427.3,345.0 L428.9,349.6 L431.9,355.8 L433.5,365.0 L435.0,376.0 L433.5,376.0 L435.0,379.1 L442.7,382.9 L451.9,382.1 L454.9,377.5 L456.5,375.2 L462.6,376.0 L464.1,361.9 L465.7,352.7 L468.7,345.0 L473.3,337.3 L475.0,333.4 L477.8,329.7 L475.9,320.5 L475.0,318.7 L466.7,318.2 L466.2,316.4 L470.4,314.1 L471.3,309.5 L471.3,305.8 L462.1,308.5 L459.3,307.6 L453.8,304.9 L452.9,302.1 L452.9,296.6 L456.1,296.6 L457.5,299.3 L462.1,298.0 L470.4,295.7 L475.0,297.0 L477.8,301.2 L481.4,299.8 L485.1,300.3 L484.4,289.2 L486.0,286.4 L488.6,286.4 L488.6,291.6 L491.2,291.6 L498.0,291.4 L498.4,287.6 L501.1,287.2 L501.1,286.4 L504.7,286.4 L504.7,290.8 L501.5,291.2 L500.0,292.8 L498.4,295.2 L497.6,299.2 L495.2,300.8 L494.8,306.0 L491.6,306.7 L487.0,309.5 L486.0,312.2 L487.0,316.8 L489.7,318.7 L490.2,322.4 L490.2,327.9 L495.2,329.7 L495.2,333.4 L503.5,334.3 L504.5,329.7 L506.3,326.0 L509.2,324.2 L513.7,324.2 L519.4,589.4 L218.1,589.4 L218.1,579.7 L218.9,574.0 L221.2,567.9 L222.0,561.8 L221.2,555.6 L216.6,551.0 L212.0,549.5 L212.0,552.6 L207.1,554.1 L201.0,555.6 L194.8,558.7 L188.7,572.5 L185.6,579.7 L185.6,589.4 L126.6,589.4 L126.6,579.7 L125.8,574.0 L128.9,571.7 L136.5,569.4 L141.6,563.7 L147.9,560.5 L152.0,551.0 L156.2,547.0 L160.3,549.0 L164.5,550.1 L168.7,547.0 L168.7,541.7 L162.5,540.7 L166.8,532.3 L164.9,524.9 L170.3,521.9 L171.0,515.7 L176.4,511.9 L175.7,506.5 L179.5,501.9 L187.9,495.8 L190.2,488.1 L191.8,482.0 L183.5,500.0 L186.0,496.3 L188.6,491.3 L190.3,484.5 L195.3,481.1 L198.7,476.1 L199.5,471.0 L202.9,471.9 L205.4,467.6 L210.5,465.9 L214.7,462.6 L213.0,457.5 L212.2,453.3 L215.6,449.1 L215.6,442.3 L220.6,441.5 L224.0,438.9 L223.2,431.4 L218.9,429.7 L218.1,426.3 L222.3,423.8 L225.7,421.2 L230.8,418.7 L233.3,415.3 L232.4,408.6 L228.2,406.9 L224.0,410.3 L220.6,412.8 L213.9,408.6 L207.1,406.9 L200.4,408.6 L195.3,411.9 L191.1,410.3 L191.9,405.2 L198.7,401.8 L203.8,396.8 L213.9,392.5 L221.8,387.8 L220.9,381.4 L218.1,376.8 L220.0,367.6 L221.8,365.8 L220.9,362.1 L220.0,357.5 L216.3,354.7 L212.6,352.9 L208.9,351.0 L208.6,343.5 L202.5,340.4 L197.1,337.3 L196.4,331.2 L194.8,325.1 L191.8,322.0 L190.2,316.6 L187.9,312.8 L187.2,306.7 L184.1,299.0 L182.6,291.3 L179.5,285.2 L173.3,282.9 L164.1,277.5 L158.0,276.0 L156.5,273.4 L153.4,269.6 L154.2,265.0 L158.0,263.4 L159.5,255.8 L164.1,251.2 L165.7,246.6 L174.1,242.0 L176.4,237.3 L179.5,232.7 L178.7,230.4 L174.9,229.7Z" fill="none" stroke="#000" stroke-width="1" stroke-linejoin="round" shape-rendering="crispEdges" />
<path d="M426,79.1 L421.1,85.2 L416.2,90.1 L411.3,95.6 L406.4,100.5 L400.2,105.4 L392.9,110.4 L389.2,114 L387.5,117.7 L386.4,125.1 L387.2,130 L389.9,136.1 L393.1,142.3 L396.3,149.6 L399.3,158.6 L404.8,166.8 L412.5,174.5 L420.1,181.4 L424.6,188.6 L425.6,194.4 L426.5,210 L427.7,219.2 L425,225.3 L424.2,230.7 L424.6,236.1 L428.8,240.7 L437.3,242.6 L448,241.8 L451.8,238.8 L458,235.3 L464.1,233 L476.8,233.2 L485.4,231.3 L490.3,226.4 L491.5,219.1 L491.5,211.7 L490.3,204.4 L490.3,198.8 L480.5,199.4 L474.4,198.2 L471.9,194.5 L473.1,192.1 L476.8,192.7 L481.7,194.5 L487.9,191.5 L494,186 L498.9,182.9 L503.8,182.3 L507.5,186 L508.1,194.5 L509.5,200" fill="none" stroke="#000" stroke-width="1.6" stroke-linejoin="round"/>
<path d="M422.3,79.1 L418.6,84.6 L413.7,89.5 L408.8,94.4 L403.9,99.3 L399,103 L392.9,107.9 L386.7,111.6 L384,115.3 L382.6,125.1 L383.6,130 L385.6,134.9 L389.2,142.3 L391.8,150 L394.6,159.2 L400.8,168.6 L408.6,176.6 L416.6,184.6 L419.9,189.3 L420.9,196 L422.7,210 L423.4,219.2 L422.3,225.3 L421.5,230.7 L422.3,238.4 L426.5,243.7 L434.2,246 L447.2,245.3 L451.8,243 L458,239.1 L464.1,236.8 L480.5,236.9 L489.1,235 L494,228.9 L495.8,221.5 L496.4,212.9 L495.2,206.8 L494,200.7 L494,194.5 L496.4,188.4 L501.3,186 L506.3,187.8 L507.5,194.5" fill="none" stroke="#000" stroke-width="1.6" stroke-linejoin="round"/>
<path d="M509.5,344.1 L506.9,346 L502.6,347.8 L498.9,346 L492.8,341.7 L487.9,340.4 L484.2,341.7 L480.5,347.2 L478,354.6 L478,365.3 L474.6,373 L471.9,380 L468.8,386.1 L465.8,395.3 L462.1,402.1 L457.8,407.6 L453.5,413.7 L447.4,419.3 L444,426.1 L440.8,431.5 L437.2,435.4 L431,436.1 L425.7,434.6 L420.3,436.9 L419.5,441.5 L425.7,443 L428.7,445.3 L431,449.9 L430.3,455.3 L432.6,460.7 L432.6,466.8 L429.5,470.6 L424.1,472.9 L419.5,469.9 L415.7,472.9 L410.3,477.5 L408,480 L405.9,488.4 L399.4,492.1 L393,500.4 L388.4,508.6 L383.8,514.2 L378.3,521.5 L373,532.7 L367.9,535.2 L360.4,536.5 L354.1,536.5 L352.8,530.2 L347.8,526.4 L342.8,525.2 L340.3,521.4 L345.3,513.8 L349.1,513.8 L352.8,516.4 L354.1,521.4 L357.9,516.4 L361.6,513.8 L366.7,506.3 L370.4,500 L376.4,494.3 L381,497.3 L384.1,501.9 L388.7,501.9 L390.2,508.1 L388.7,515.7 L382.6,523.4" fill="none" stroke="#000" stroke-width="1.6" stroke-linejoin="round"/>
<path d="M509.5,341 L506.3,343.5 L501.3,346 L497.7,343.5 L491.5,338.6 L486.6,336.7 L481.7,338.6 L476.8,346 L474.4,354.5 L473.8,366.1 L470,373 L465.8,380 L463.3,388 L461.5,395.3 L457.2,402.1 L453.5,407.6 L448.6,414.4 L442.5,419.3 L440.8,425.1 L437.6,429.4 L432.2,432.6 L425.8,433.1 L420.4,434.7 L417.7,439 L420.4,443.3 L425.8,446.5 L427.2,449.9 L425.7,456.1 L428.7,460.7 L430.3,464.5 L428.7,469.1 L425.7,471.4 L419.5,472.2 L414.9,475.2 L411.9,479.1 L410.5,483.8 L409.6,490.2 L402.2,493.9 L395.8,501.3 L391.2,508.6 L386.6,516 L381,523.4 L378.3,530" fill="none" stroke="#000" stroke-width="1.6" stroke-linejoin="round"/>
<path d="M258,580 L261.5,575.5 L270.3,569.2 L280.4,562.9 L290.4,556.6 L300,554 L307.5,550 L318.9,539 L334,532.7 L342.8,532.7 L347.8,535.2 L350.3,540.3 L347.8,546.5 L340.3,552.8 L334,559.1 L327.7,562.9 L317.6,566.7 L307.5,573 L300,575.5 L292,580" fill="none" stroke="#000" stroke-width="1.6" stroke-linejoin="round"/>
<path d="M262,580 L265.3,578 L275.3,571.7 L285.4,565.4 L295.5,560.4 L300,559.5 L316.4,549.1 L322.6,541.5 L335.2,536.5 L342.8,536.5 L346.5,540.3 L345.3,544 L339,550.3 L331.4,557.9 L325.2,561.6 L316.4,564.2 L305,571.7 L296,578" fill="none" stroke="#000" stroke-width="1.6" stroke-linejoin="round"/>
<path d="M221.3,580 L225,575.5 L233.8,574.2 L236.4,570.4 L230.1,565.4 L228.8,560.4 L232.6,552.8 L232,548.4 L236.4,546.5 L241.4,542.8 L247,539.6 L250.2,540.9 L257.7,540.3 L270.3,538.4 L280.4,535.2 L288.6,532.7 L292.3,528.9 L293,522.6 L296.1,518.9 L300,518.9 L305,516.4 L307.5,512.6 L316.4,506.3 L322.6,500 L330,492.8 L331.2,489.1 L332.5,481.7 L337.4,475.6 L344.7,469.4 L349.6,464.5 L350.9,454.7 L354.5,447.4 L359.4,440 L361.1,434.3 L367.2,425.1 L376.4,420.5 L379.5,409.7 L381,399 L382.6,391.3 L388.7,386.7 L390.2,376 L388.2,369.3 L394.8,358.8 L401,351.9 L404,350.4 L412,351.2 L416.4,352.1 L417.7,359.4 L415.2,366.8 L417.1,370.5 L416.4,374.2 L410.3,380.3 L410.3,384 L415.2,387.7 L421.3,386.4 L420.1,393.8 L423.8,398.7 L427.5,403.6 L429,405.7 L426.8,410 L418.3,411.1 L416.1,416.5 L409.7,423.5 L415,428.3 L421.5,427.2 L426.8,421.8 L432.2,414.3 L434.4,413.8 L431.1,420.8 L430.1,427.2 L432.2,432" fill="none" stroke="#000" stroke-width="1.6" stroke-linejoin="round"/>
<path d="M261.5,580 L259,575.5 L255.2,570.4 L250.2,568.6 L241.4,567.9 L232.6,564.2 L231.3,560.4 L233.8,555.3 L240.1,550.3 L245.2,545.3 L248.9,543.4 L250.2,545.3 L257.7,543.4 L267.8,541.5 L279.1,539 L289.2,536.5 L294.2,532.7 L295.5,527.7 L296.7,522.6 L300,522 L307.5,522.6 L308.8,518.9 L311.3,513.8 L318.9,508.8 L325.2,501.3 L331,495 L333.7,489.1 L336.1,482.9 L342.3,476.8 L349.6,470.7 L355.8,464.5 L357,454.7 L361.9,447.4 L363.1,440 L370.3,432.7 L381,428.1 L387.2,425.1 L394.8,426.6 L396.4,434.3 L395.8,444.3 L386.2,445.4 L387.2,447.5 L391.5,446.4 L389.4,451.8 L386.2,456.1 L388.3,459.3 L390.5,463.6 L389.4,469 L385.1,470.1 L380.8,466.8 L377.6,464.2 L378.7,460.4 L380.3,457.7 L377.6,455 L373.3,456.1 L369,458.8 L364.7,461.5 L365.8,465.8 L370.1,467.9 L369,474.4 L369,479.7 L371.1,480.8 L367.9,485.1 L361.5,488.3 L360.4,493.7 L356.1,498 L350.7,503.3 L348.6,508.7" fill="none" stroke="#000" stroke-width="1.6" stroke-linejoin="round"/>
<path d="M348.8,508.1 L361.1,498.9 L365.7,496.6 L376.4,494.3 L381,497.3 L384.1,501.9 L388.7,501.9 L390.2,508.1 L388.7,515.7 L382.6,523.4 L374.9,529.5 L365.7,534.1 L354.9,535.7 L350.3,529.5 L342.7,523.4 L339.6,520.3 L345.7,514.2 L348.8,508.1" fill="none" stroke="#000" stroke-width="1.6" stroke-linejoin="round"/>
<path d="M425.7,449.2 L420.3,447.6 L415.7,452.2 L406.5,460.7 L401.1,465.3 L399.6,469.9 L396.5,473.7 L395,476" fill="none" stroke="#000" stroke-width="1.6" stroke-linejoin="round"/>
<path d="M388.9,476.5 L392.6,473.8 L398,474.4 L400.1,477.6 L398,480.8 L395.8,482.9 L392.6,481.9 L390.5,479.7 L388.9,476.5" fill="none" stroke="#000" stroke-width="1.6" stroke-linejoin="round"/>
<path d="M388.3,491.5 L392.6,487.2 L396.9,486.2 L400.1,488.3 L398,492.6 L392.6,495.8 L389.4,494.8 L388.3,491.5" fill="none" stroke="#000" stroke-width="1.6" stroke-linejoin="round"/>
<path d="M421.1,131.2 L428.4,130 L430.3,133.7 L428.4,137.3 L426,138.6 L422.3,142.3 L419.9,143.5 L417.4,139.8 L421.1,136.1Z" fill="none" stroke="#000" stroke-width="1.6" stroke-linejoin="round"/>
<path d="M424.5,160 L427.5,155.5 L431.5,156.5 L432.3,160.5 L428.5,167.5 L425,168 L424,164Z" fill="none" stroke="#000" stroke-width="1.6" stroke-linejoin="round"/>
<path d="M444.4,186 L448.6,181.4 L452.8,186 L448.6,190.6Z" fill="none" stroke="#000" stroke-width="1.6" stroke-linejoin="round"/>
<path d="M456.2,172.5 L459.5,169 L466.5,167.6 L468.2,169.5 L464,172.5 L457.5,174.5Z" fill="none" stroke="#000" stroke-width="1.6" stroke-linejoin="round"/>
<ellipse cx="421" cy="153" rx="1.8" ry="3.5" fill="#000"/>
<ellipse cx="413" cy="167.6" rx="1.5" ry="2.2" fill="#000"/>
<ellipse cx="416.8" cy="162.3" rx="0.9" ry="0.9" fill="#000"/>
<ellipse cx="408.4" cy="439.2" rx="5" ry="5.4" fill="none" stroke="#000" stroke-width="1.7"/>
<ellipse cx="401.9" cy="449.6" rx="2.5" ry="2.5" fill="none" stroke="#000" stroke-width="1.7"/>
<ellipse cx="396" cy="462.3" rx="2" ry="2.5" fill="#000"/>
<ellipse cx="417.2" cy="431.5" rx="1" ry="1" fill="#000"/>
<ellipse cx="395.8" cy="459.9" rx="1.8" ry="2.2" fill="#000"/>
<ellipse cx="383.1" cy="489.9" rx="1.3" ry="1.3" fill="#000"/>
<ellipse cx="459.9" cy="533.6" rx="0.8" ry="1.2" fill="#000"/>
<ellipse cx="378.1" cy="450.2" rx="2.2" ry="2.8" fill="none" stroke="#000" stroke-width="1.7"/>
<ellipse cx="402" cy="450.5" rx="2" ry="3" fill="none" stroke="#000" stroke-width="1.7"/>
</g></g>
<line x1="173.5" y1="80" x2="173.5" y2="580" stroke="#000" stroke-width="1" stroke-dasharray="3,3" shape-rendering="crispEdges"/>
<line x1="249.5" y1="80" x2="249.5" y2="580" stroke="#000" stroke-width="1" stroke-dasharray="3,3" shape-rendering="crispEdges"/>
<line x1="325.5" y1="80" x2="325.5" y2="580" stroke="#000" stroke-width="1" stroke-dasharray="3,3" shape-rendering="crispEdges"/>
<line x1="401.5" y1="80" x2="401.5" y2="580" stroke="#000" stroke-width="1" stroke-dasharray="3,3" shape-rendering="crispEdges"/>
<line x1="478.5" y1="80" x2="478.5" y2="580" stroke="#000" stroke-width="1" stroke-dasharray="3,3" shape-rendering="crispEdges"/>
<line x1="117" y1="138.5" x2="509" y2="138.5" stroke="#000" stroke-width="1" stroke-dasharray="3,3" shape-rendering="crispEdges"/>
<line x1="117" y1="234.5" x2="509" y2="234.5" stroke="#000" stroke-width="1" stroke-dasharray="3,3" shape-rendering="crispEdges"/>
<line x1="117" y1="326.5" x2="509" y2="326.5" stroke="#000" stroke-width="1" stroke-dasharray="3,3" shape-rendering="crispEdges"/>
<line x1="117" y1="416.5" x2="509" y2="416.5" stroke="#000" stroke-width="1" stroke-dasharray="3,3" shape-rendering="crispEdges"/>
<line x1="117" y1="502.5" x2="509" y2="502.5" stroke="#000" stroke-width="1" stroke-dasharray="3,3" shape-rendering="crispEdges"/>
<rect x="864" y="130" width="30" height="392.5" fill="#000"/>
<rect x="865" y="131" width="28" height="38" fill="#df0000"/>
<rect x="865" y="169" width="28" height="39" fill="#ff4000"/>
<rect x="865" y="208" width="28" height="39" fill="#ffaf00"/>
<rect x="865" y="247" width="28" height="39" fill="#efff10"/>
<rect x="865" y="286" width="28" height="40" fill="#8fff70"/>
<rect x="865" y="326" width="28" height="39" fill="#20ffdf"/>
<rect x="865" y="365" width="28" height="39" fill="#00bfff"/>
<rect x="865" y="404" width="28" height="39" fill="#0050ff"/>
<rect x="865" y="443" width="28" height="39" fill="#0000ef"/>
<rect x="865" y="482" width="28" height="39" fill="#00008f"/>
<line x1="865" y1="137.5" x2="869" y2="137.5" stroke="#000"/><line x1="889" y1="137.5" x2="893" y2="137.5" stroke="#000"/>
<text x="896" y="142.0" font-size="12.4">4</text>
<line x1="865" y1="197.5" x2="869" y2="197.5" stroke="#000"/><line x1="889" y1="197.5" x2="893" y2="197.5" stroke="#000"/>
<text x="896" y="202.0" font-size="12.4">3</text>
<line x1="865" y1="257.5" x2="869" y2="257.5" stroke="#000"/><line x1="889" y1="257.5" x2="893" y2="257.5" stroke="#000"/>
<text x="896" y="262.0" font-size="12.4">2</text>
<line x1="865" y1="317.5" x2="869" y2="317.5" stroke="#000"/><line x1="889" y1="317.5" x2="893" y2="317.5" stroke="#000"/>
<text x="896" y="322.0" font-size="12.4">1</text>
<line x1="865" y1="377.5" x2="869" y2="377.5" stroke="#000"/><line x1="889" y1="377.5" x2="893" y2="377.5" stroke="#000"/>
<text x="896" y="382.0" font-size="12.4">0</text>
<line x1="865" y1="437.5" x2="869" y2="437.5" stroke="#000"/><line x1="889" y1="437.5" x2="893" y2="437.5" stroke="#000"/>
<text x="896" y="442.0" font-size="12.4">-1</text>
<line x1="865" y1="497.5" x2="869" y2="497.5" stroke="#000"/><line x1="889" y1="497.5" x2="893" y2="497.5" stroke="#000"/>
<text x="896" y="502.0" font-size="12.4">-2</text>
<text x="155.9" y="603" font-size="12.8">120<tspan dy="-4.6" font-size="10">o</tspan><tspan dy="4.6">E</tspan></text>
<text x="231.9" y="603" font-size="12.8">123<tspan dy="-4.6" font-size="10">o</tspan><tspan dy="4.6">E</tspan></text>
<text x="307.9" y="603" font-size="12.8">126<tspan dy="-4.6" font-size="10">o</tspan><tspan dy="4.6">E</tspan></text>
<text x="383.9" y="603" font-size="12.8">129<tspan dy="-4.6" font-size="10">o</tspan><tspan dy="4.6">E</tspan></text>
<text x="460.9" y="603" font-size="12.8">132<tspan dy="-4.6" font-size="10">o</tspan><tspan dy="4.6">E</tspan></text>
<text x="77.6" y="143.5" font-size="12.8">39<tspan dy="-4.6" font-size="10">o</tspan><tspan dy="4.6">N</tspan></text>
<text x="77.6" y="239.5" font-size="12.8">36<tspan dy="-4.6" font-size="10">o</tspan><tspan dy="4.6">N</tspan></text>
<text x="77.6" y="331.5" font-size="12.8">33<tspan dy="-4.6" font-size="10">o</tspan><tspan dy="4.6">N</tspan></text>
<text x="77.6" y="421.5" font-size="12.8">30<tspan dy="-4.6" font-size="10">o</tspan><tspan dy="4.6">N</tspan></text>
<text x="77.6" y="507.5" font-size="12.8">27<tspan dy="-4.6" font-size="10">o</tspan><tspan dy="4.6">N</tspan></text>
</svg>
</body></html>
